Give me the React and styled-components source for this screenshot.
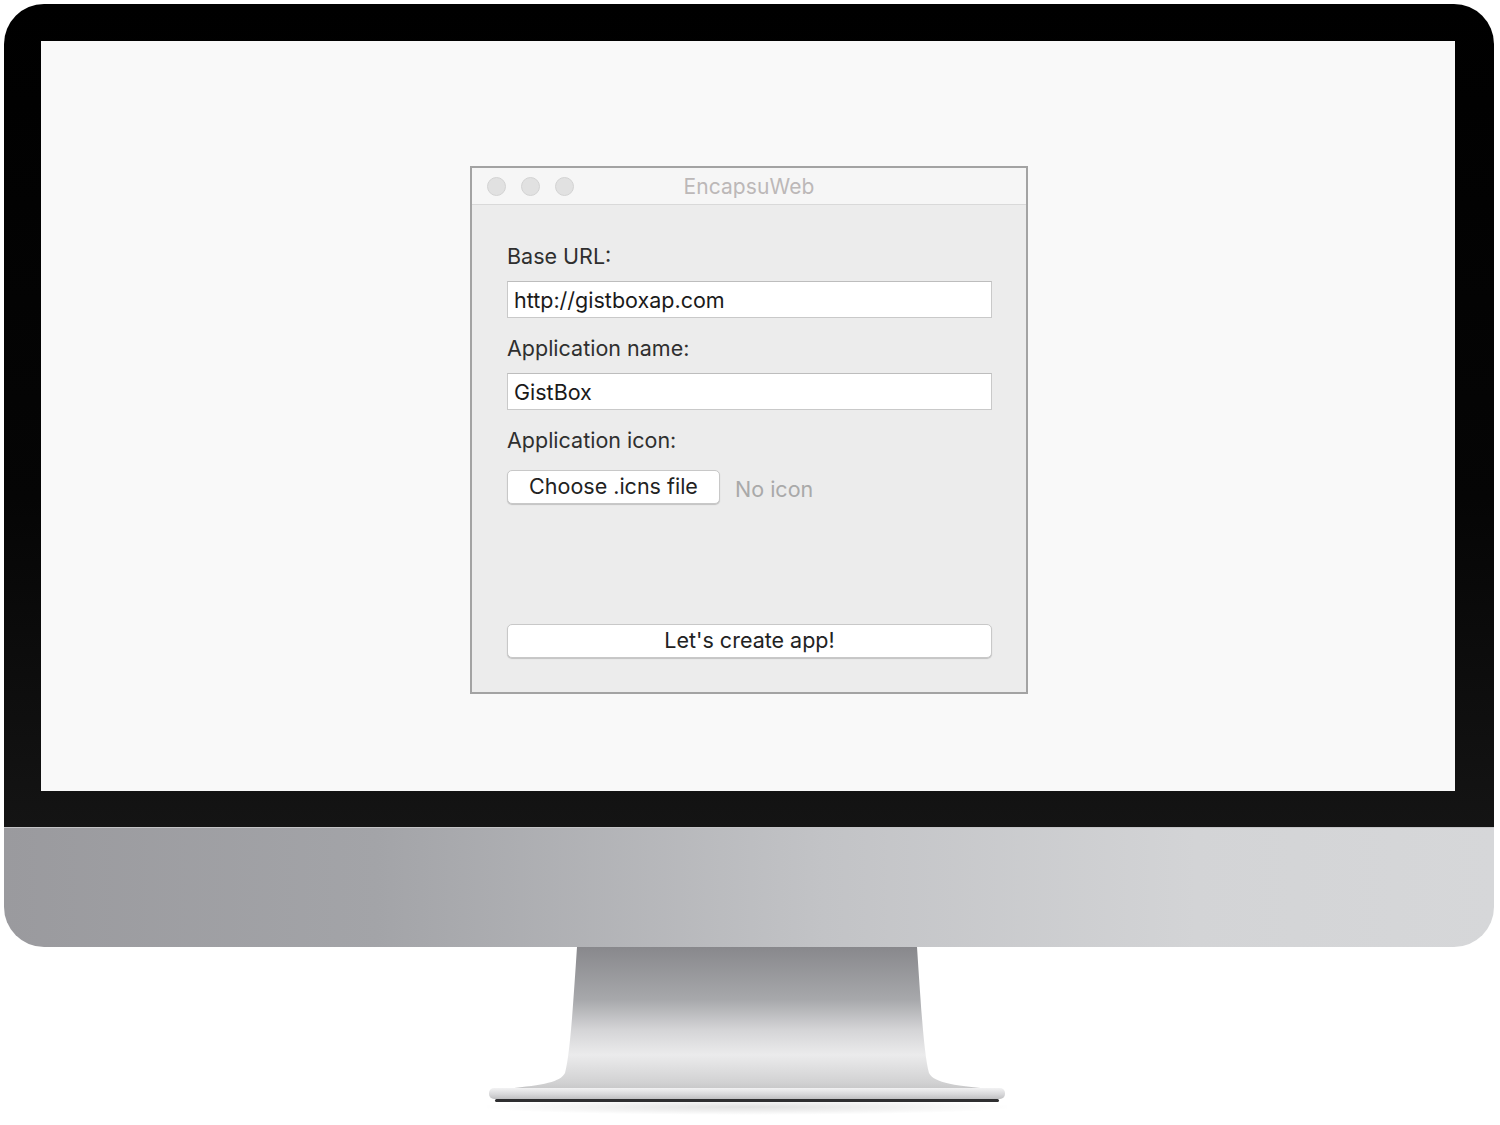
import React from "react";
import styled, { createGlobalStyle } from "styled-components";

const Global = createGlobalStyle`
  html, body { margin: 0; padding: 0; background: #ffffff; }
  body { font-family: Inter, "Open Sans", "Liberation Sans", sans-serif; }
  * { box-sizing: border-box; }
`;

const Page = styled.div`
  width: 1500px;
  height: 1125px;
  padding: 4px 6px 0 4px;
  display: flex;
  flex-direction: column;
  align-items: stretch;
  background: #fff;
`;

const Monitor = styled.div`
  width: 1490px;
  display: flex;
  flex-direction: column;
`;

const Bezel = styled.div`
  background: linear-gradient(180deg, #000 0%, #050505 60%, #141414 100%);
  border-radius: 40px 40px 0 0;
  padding: 37px 39px 36px 37px;
`;

const Screen = styled.div`
  height: 750px;
  background: #f9f9f9;
  display: flex;
  justify-content: center;
  padding-top: 125px;
  padding-left: 2px;
`;

const Chin = styled.div`
  height: 120px;
  border-top: 1px solid #c4c4c6;
  border-radius: 0 0 40px 40px;
  background: linear-gradient(90deg, #9a9a9e 0%, #a3a4a8 25%, #c2c3c6 55%, #d3d4d6 80%, #d6d7d9 100%);
`;

const StandWrap = styled.div`
  display: flex;
  justify-content: center;
  padding-right: 4px;
`;

const Window = styled.div`
  width: 558px;
  height: 528px;
  border: 2px solid #a3a3a3;
  background: #ececec;
  display: flex;
  flex-direction: column;
`;

const TitleBar = styled.div`
  height: 37px;
  background: #f6f6f6;
  border-bottom: 1px solid #d9d9d9;
  display: grid;
  grid-template-columns: 1fr auto 1fr;
  align-items: center;
  padding: 0 15px;
`;

const Lights = styled.div`
  display: flex;
  gap: 15px;
`;

const Light = styled.span`
  width: 19px;
  height: 19px;
  border-radius: 50%;
  background: #e1e1e1;
  border: 1px solid #d3d3d3;
`;

const Title = styled.div`
  font-size: 21px;
  color: #bcb8b8;
  letter-spacing: 0.1px;
`;

const Content = styled.div`
  flex: 1;
  display: flex;
  flex-direction: column;
  padding: 39px 34px 34px 35px;
`;

const Label = styled.div`
  font-size: 21.5px;
  line-height: 24px;
  color: #2f2f2f;
  margin-bottom: ${(p) => p.$mb ?? 13}px;
`;

const TextInput = styled.input`
  width: 485px;
  height: 37px;
  border: 1px solid #c9c9c9;
  border-top-color: #bdbdbd;
  background: #fff;
  padding: 0 6px;
  font-family: Inter, "Open Sans", "Liberation Sans", sans-serif;
  font-size: 21.5px;
  color: #1a1a1a;
  outline: none;
  margin-bottom: 18px;
`;

const Row = styled.div`
  display: flex;
  align-items: center;
  gap: 15px;
  margin-top: 7px;
`;

const Button = styled.button`
  width: ${(p) => p.$w}px;
  height: 34px;
  border-radius: 5px;
  background: #fff;
  border: 1px solid #c8c8c8;
  box-shadow: 0 1px 1px rgba(0, 0, 0, 0.18);
  font-family: Inter, "Open Sans", "Liberation Sans", sans-serif;
  font-size: 21.5px;
  color: #222;
  padding: 0 0 2px;
  cursor: default;
  margin-top: ${(p) => (p.$bottom ? "auto" : "0")};
`;

const Muted = styled.span`
  font-size: 21.5px;
  color: #a9a9a9;
  padding-top: 3px;
`;

const Stand = () => (
  <svg width="520" height="170" viewBox="0 0 520 170">
    <defs>
      <linearGradient id="neck" x1="0" y1="0" x2="0" y2="1">
        <stop offset="0" stopColor="#88888c" />
        <stop offset="0.35" stopColor="#a7a8ab" />
        <stop offset="0.55" stopColor="#d4d4d6" />
        <stop offset="0.72" stopColor="#ebebec" />
        <stop offset="0.9" stopColor="#d2d2d3" />
        <stop offset="1" stopColor="#bdbdbe" />
      </linearGradient>
      <linearGradient id="neckEdge" x1="0" y1="0" x2="1" y2="0">
        <stop offset="0" stopColor="#000" stopOpacity="0.10" />
        <stop offset="0.08" stopColor="#000" stopOpacity="0" />
        <stop offset="0.92" stopColor="#000" stopOpacity="0" />
        <stop offset="1" stopColor="#000" stopOpacity="0.10" />
      </linearGradient>
      <linearGradient id="base" x1="0" y1="0" x2="0" y2="1">
        <stop offset="0" stopColor="#f2f2f3" />
        <stop offset="0.6" stopColor="#d6d6d8" />
        <stop offset="1" stopColor="#bfbfc1" />
      </linearGradient>
      <radialGradient id="shadow" cx="0.5" cy="0.5" r="0.5">
        <stop offset="0" stopColor="#000" stopOpacity="0.12" />
        <stop offset="1" stopColor="#000" stopOpacity="0" />
      </radialGradient>
    </defs>
    <ellipse cx="260" cy="160" rx="270" ry="8" fill="url(#shadow)" />
    <path
      d="M90,0 L430,0 C434,60 437,108 442,126 C447,136 468,139 515,143 L515,150 L5,150 L5,143 C52,139 73,136 78,126 C83,108 86,60 90,0 Z"
      fill="url(#neck)"
    />
    <path
      d="M90,0 L430,0 C434,60 437,108 442,126 C447,136 468,139 515,143 L515,150 L5,150 L5,143 C52,139 73,136 78,126 C83,108 86,60 90,0 Z"
      fill="url(#neckEdge)"
    />
    <rect x="2" y="141" width="516" height="11" rx="5" fill="url(#base)" />
    <rect x="8" y="152" width="504" height="3" rx="1.5" fill="#2e2e30" />
  </svg>
);

export default function App() {
  return (
    <>
      <Global />
      <Page>
        <Monitor>
          <Bezel>
            <Screen>
              <Window>
                <TitleBar>
                  <Lights>
                    <Light />
                    <Light />
                    <Light />
                  </Lights>
                  <Title>EncapsuWeb</Title>
                  <span />
                </TitleBar>
                <Content>
                  <Label>Base URL:</Label>
                  <TextInput readOnly value="http://gistboxap.com" />
                  <Label>Application name:</Label>
                  <TextInput readOnly value="GistBox" />
                  <Label $mb={11}>Application icon:</Label>
                  <Row>
                    <Button $w={213}>Choose .icns file</Button>
                    <Muted>No icon</Muted>
                  </Row>
                  <Button $w={485} $bottom>
                    Let's create app!
                  </Button>
                </Content>
              </Window>
            </Screen>
          </Bezel>
          <Chin />
        </Monitor>
        <StandWrap>
          <Stand />
        </StandWrap>
      </Page>
    </>
  );
}
